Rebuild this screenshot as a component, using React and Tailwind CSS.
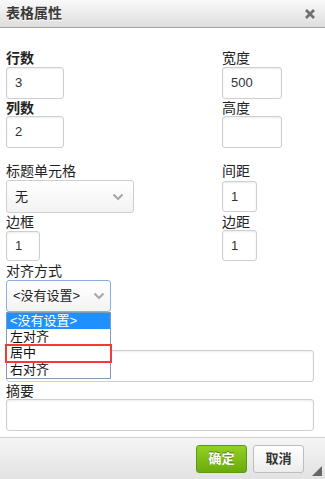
import React from 'react';

const cjk = "font-['Liberation_Sans','Noto_Sans_CJK_SC',sans-serif]";

function Label({ children, bold }) {
  return (
    <div className={`h-[16px] text-[14px] leading-[16px] text-[#222] ${bold ? 'font-bold' : ''}`}>
      {children}
    </div>
  );
}

function Field({ value, w, h = 'h-[32px]' }) {
  return (
    <div
      className={`${w} ${h} flex items-center rounded-[3px] border border-[#cfcfcf] bg-white pl-[8px] text-[13px] text-[#333] shadow-[inset_0_1px_2px_rgba(0,0,0,0.08)]`}
    >
      {value}
    </div>
  );
}

function Chevron() {
  return (
    <svg width="12" height="8" viewBox="0 0 12 8" className="text-[#a8a8a8]">
      <path d="M1.5 1.5 L6 6 L10.5 1.5" fill="none" stroke="currentColor" strokeWidth="2.2" />
    </svg>
  );
}

export default function App() {
  return (
    <div className={`relative flex h-[479px] w-[325px] flex-col overflow-hidden bg-white ${cjk}`}>
      <div className="flex h-[28px] items-center justify-between border-b border-[#a3a3a3] bg-gradient-to-b from-[#f9f9f9] to-[#dedede] pl-[6px] pr-[9px]">
        <span className="text-[14px] font-bold text-[#3a3a3a] [text-shadow:0_1px_0_#fff]">表格属性</span>
        <svg width="12" height="12" viewBox="0 0 12 12">
          <path d="M2 2 L10 10 M10 2 L2 10" stroke="#6f6f6f" strokeWidth="2.6" />
        </svg>
      </div>

      <div className="flex-1 px-[6px] pt-[22px]">
        <div className="grid grid-cols-[216px_1fr]">
          <div>
            <Label bold>行数</Label>
            <div className="mt-px"><Field value="3" w="w-[58px]" /></div>
          </div>
          <div>
            <Label>宽度</Label>
            <div className="mt-px"><Field value="500" w="w-[60px]" /></div>
          </div>
        </div>

        <div className="mt-px grid grid-cols-[216px_1fr]">
          <div>
            <Label bold>列数</Label>
            <Field value="2" w="w-[58px]" />
          </div>
          <div>
            <Label>高度</Label>
            <Field value="" w="w-[60px]" />
          </div>
        </div>

        <div className="mt-[15px] grid grid-cols-[216px_1fr]">
          <div>
            <Label>标题单元格</Label>
            <div className="mt-px flex h-[33px] w-[128px] items-center justify-between rounded-[3px] border border-[#cfcfcf] bg-gradient-to-b from-white to-[#f3f3f3] pl-[8px] pr-[9px] text-[13px] text-[#222]">
              <span>无</span>
              <Chevron />
            </div>
          </div>
          <div>
            <Label>间距</Label>
            <div className="mt-[2px]"><Field value="1" w="w-[35px]" h="h-[31px]" /></div>
          </div>
        </div>

        <div className="mt-px grid grid-cols-[216px_1fr]">
          <div>
            <Label>边框</Label>
            <div className="mt-px"><Field value="1" w="w-[34px]" h="h-[30px]" /></div>
          </div>
          <div>
            <Label>边距</Label>
            <Field value="1" w="w-[35px]" h="h-[31px]" />
          </div>
        </div>

        <div className="mt-[2px]">
          <Label>对齐方式</Label>
          <div className="relative mt-px">
            <div className="flex h-[32px] w-[105px] items-center justify-between rounded-[3px] border border-[#8aaee0] bg-gradient-to-b from-white to-[#f3f3f3] pl-[6px] pr-[5px] text-[13px] text-[#222]">
              <span>&lt;没有设置&gt;</span>
              <Chevron />
            </div>
            <div className="absolute left-0 top-[32px] z-10 w-[105px] border border-[#7f9db9] bg-white text-[13px] leading-[16px] text-[#111]">
              <div className="h-[16px] bg-[#1e90ff] pl-[3px] text-white">&lt;没有设置&gt;</div>
              <div className="h-[16px] pl-[3px]">左对齐</div>
              <div className="relative h-[17px] pl-[3px]">
                居中
                <div className="absolute -left-[2px] -right-[2px] -top-[1px] bottom-[-1px] border-[2px] border-[#f23a3a]" />
              </div>
              <div className="h-[16px] pl-[3px]">右对齐</div>
            </div>
          </div>
        </div>

        <div className="mt-[38px]">
          <Field value="" w="w-[308px]" />
        </div>

        <div className="mt-px">
          <Label>摘要</Label>
          <Field value="" w="w-[308px]" />
        </div>
      </div>

      <div className="relative flex h-[42px] items-center justify-end gap-[6px] border-t border-[#cfcfcf] bg-gradient-to-b from-[#f5f5f5] to-[#e2e2e2] pr-[21px]">
        <button className="h-[28px] w-[51px] rounded-[3px] border border-[#5c9a10] bg-gradient-to-b from-[#93d124] to-[#6aaa0c] text-[13px] font-bold text-white [text-shadow:0_-1px_0_#4a7a08]">
          确定
        </button>
        <button className="h-[28px] w-[51px] rounded-[3px] border border-[#bdbdbd] bg-gradient-to-b from-white to-[#ececec] text-[13px] font-bold text-[#333]">
          取消
        </button>
        <svg width="10" height="10" viewBox="0 0 10 10" className="absolute bottom-[3px] right-[3px]">
          <path d="M10 0 L10 10 L0 10 Z" fill="#666" />
        </svg>
      </div>
    </div>
  );
}
